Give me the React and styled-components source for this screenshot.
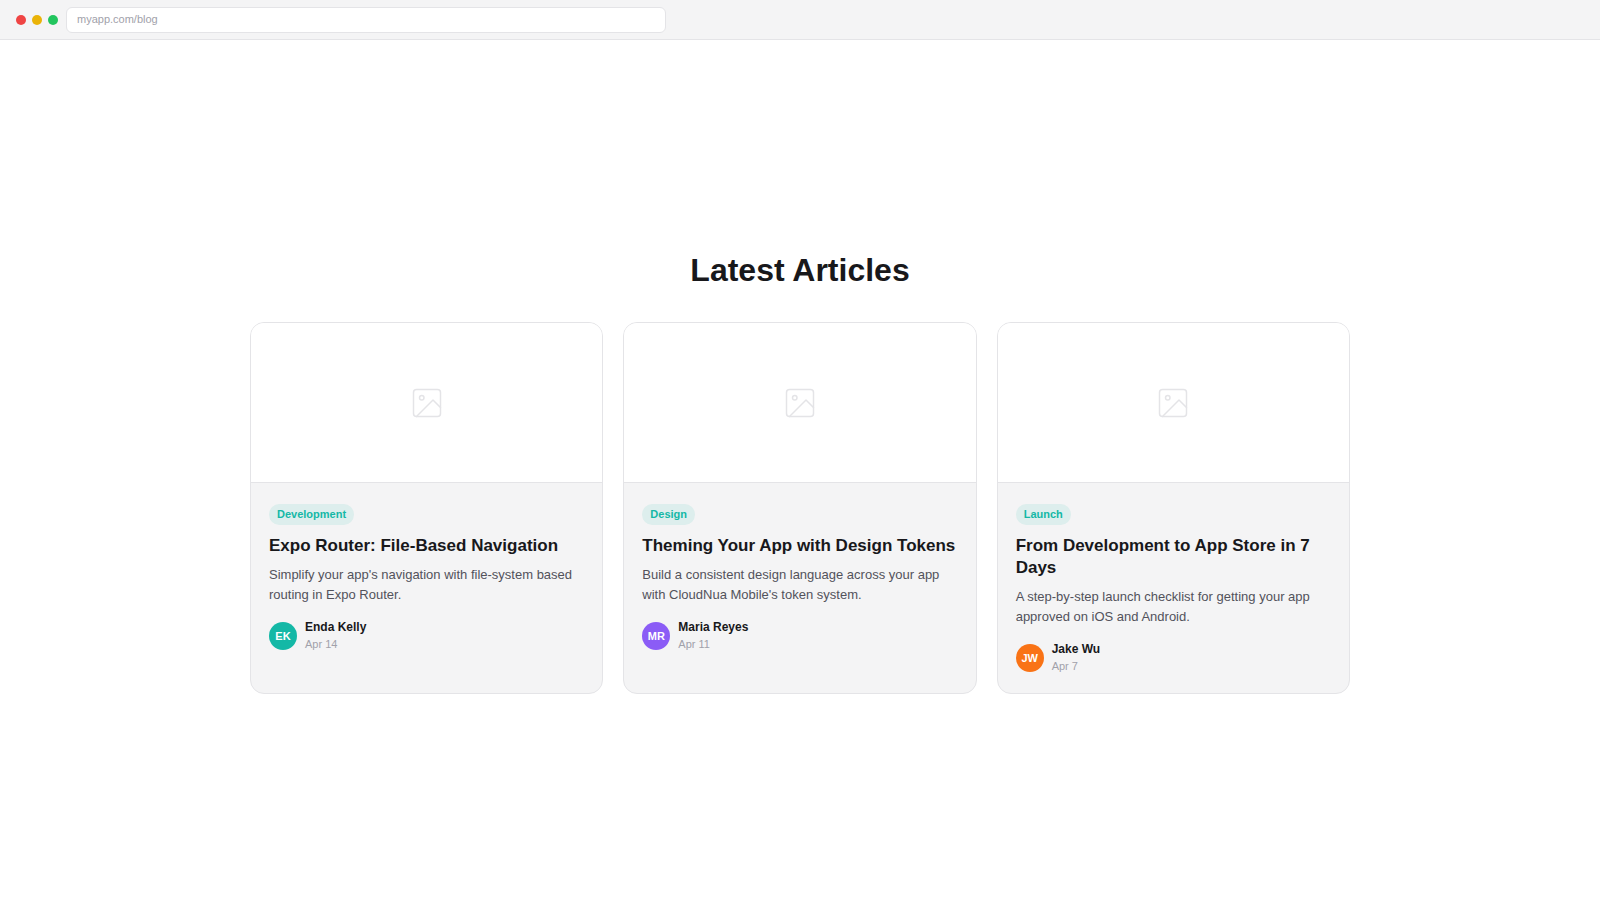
import React from 'react';
import styled, { createGlobalStyle } from 'styled-components';

const articles = [
    {
        tag: 'Development',
        title: 'Expo Router: File-Based Navigation',
        text: "Simplify your app's navigation with file-system based routing in Expo Router.",
        author: 'Enda Kelly',
        initials: 'EK',
        color: '#14b8a6',
        date: 'Apr 14',
    },
    {
        tag: 'Design',
        title: 'Theming Your App with Design Tokens',
        text: "Build a consistent design language across your app with CloudNua Mobile's token system.",
        author: 'Maria Reyes',
        initials: 'MR',
        color: '#8b5cf6',
        date: 'Apr 11',
    },
    {
        tag: 'Launch',
        title: 'From Development to App Store in 7 Days',
        text: 'A step-by-step launch checklist for getting your app approved on iOS and Android.',
        author: 'Jake Wu',
        initials: 'JW',
        color: '#f97316',
        date: 'Apr 7',
    },
];

const ImageIcon = () => (
    <svg width="36" height="36" viewBox="0 0 24 24" fill="none" stroke="currentColor" strokeWidth="1" strokeLinecap="round" strokeLinejoin="round" aria-hidden="true">
        <rect x="3" y="3" width="18" height="18" rx="2" />
        <circle cx="8.5" cy="8.5" r="1.5" />
        <path d="M21 15l-5-5L5 21" />
    </svg>
);

const ArticleCard = ({ article }) => {
    return (
        <Card>
            <Thumb>
                <ImageIcon />
            </Thumb>
            <CardBody>
                <Tag>{article.tag}</Tag>
                <CardTitle>{article.title}</CardTitle>
                <Excerpt>{article.text}</Excerpt>
                <Author>
                    <Avatar $color={article.color}>{article.initials}</Avatar>
                    <div>
                        <AuthorName>{article.author}</AuthorName>
                        <PostDate>{article.date}</PostDate>
                    </div>
                </Author>
            </CardBody>
        </Card>
    );
};

const App = () => {
    return (
        <Page>
            <GlobalStyle />
            <BrowserBar>
                <Dots>
                    <Dot $color="#ef4444" />
                    <Dot $color="#eab308" />
                    <Dot $color="#22c55e" />
                </Dots>
                <Address type="text" aria-label="Address" defaultValue="myapp.com/blog" />
            </BrowserBar>
            <Main>
                <Blog>
                    <Heading>Latest Articles</Heading>
                    <Grid>
                        {articles.map((article) => (
                            <ArticleCard key={article.title} article={article} />
                        ))}
                    </Grid>
                </Blog>
            </Main>
        </Page>
    );
};

const GlobalStyle = createGlobalStyle`
    *{
        box-sizing: border-box;
        margin: 0;
        padding: 0;
    }
    body{
        background: #ffffff;
        color: #18181b;
        font-family: "Liberation Sans", Arial, sans-serif;
    }
`;

const Page = styled.div`
    display: flex;
    flex-direction: column;
    min-height: 100vh;
`;

const BrowserBar = styled.header`
    display: flex;
    align-items: center;
    gap: 8px;
    height: 40px;
    padding: 0 16px;
    background: #f4f4f5;
    border-bottom: 1px solid #e4e4e7;
`;

const Dots = styled.div`
    display: flex;
    gap: 6px;
`;

const Dot = styled.span`
    width: 10px;
    height: 10px;
    border-radius: 50%;
    background: ${(props) => props.$color};
`;

const Address = styled.input`
    flex: 0 1 600px;
    min-width: 0;
    height: 26px;
    padding: 0 10px 2px;
    background: #ffffff;
    border: 1px solid #e4e4e7;
    border-radius: 6px;
    color: #a1a1aa;
    font-family: inherit;
    font-size: 11px;
`;

const Main = styled.main`
    flex: 1;
    display: flex;
    align-items: center;
    justify-content: center;
    padding: 24px;
`;

const Blog = styled.section`
    width: 100%;
    max-width: 1100px;
`;

const Heading = styled.h1`
    margin-bottom: 28px;
    font-size: 32px;
    line-height: 48px;
    text-align: center;
`;

const Grid = styled.div`
    display: grid;
    grid-template-columns: repeat(3, 1fr);
    gap: 20px;
    @media (max-width: 800px){
        grid-template-columns: 1fr;
    }
`;

const Card = styled.article`
    overflow: hidden;
    background: #f4f4f5;
    border: 1px solid #e4e4e7;
    border-radius: 14px;
`;

const Thumb = styled.div`
    display: flex;
    align-items: center;
    justify-content: center;
    height: 160px;
    background: #ffffff;
    border-bottom: 1px solid #e4e4e7;
    color: #e4e4e7;
`;

const CardBody = styled.div`
    display: flex;
    flex-direction: column;
    align-items: flex-start;
    padding: 21px 18px 18px;
`;

const Tag = styled.span`
    margin-bottom: 10px;
    padding: 0 8px;
    background: rgba(20, 184, 166, 0.1);
    border-radius: 999px;
    color: #14b8a6;
    font-size: 11px;
    font-weight: 600;
    line-height: 21px;
`;

const CardTitle = styled.h2`
    margin-bottom: 8px;
    font-size: 17px;
    line-height: 22px;
`;

const Excerpt = styled.p`
    margin-bottom: 14px;
    color: #52525b;
    font-size: 13px;
    line-height: 20px;
`;

const Author = styled.div`
    display: flex;
    align-items: center;
    gap: 8px;
`;

const Avatar = styled.span`
    display: flex;
    align-items: center;
    justify-content: center;
    width: 28px;
    height: 28px;
    border-radius: 50%;
    background: ${(props) => props.$color};
    color: #ffffff;
    font-size: 11px;
    font-weight: 700;
`;

const AuthorName = styled.p`
    font-size: 12px;
    font-weight: 600;
    line-height: 17px;
`;

const PostDate = styled.p`
    color: #a1a1aa;
    font-size: 11px;
    line-height: 17px;
`;

export default App;
